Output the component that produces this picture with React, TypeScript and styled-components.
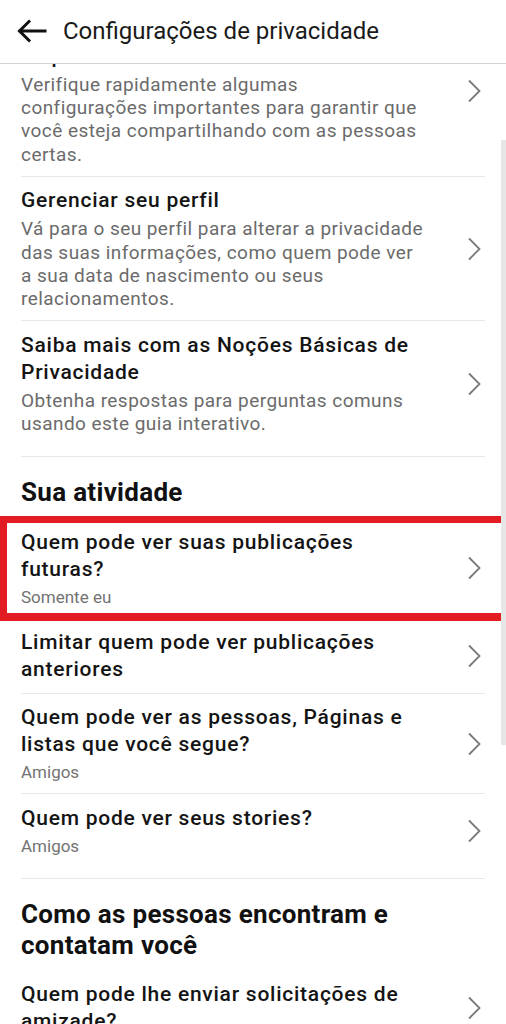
import React from "react";
import styled, { createGlobalStyle } from "styled-components";

const GlobalStyle = createGlobalStyle`
  html, body {
    margin: 0;
    padding: 0;
    background: #ffffff;
  }
  body {
    font-family: Roboto, "Noto Sans", "Liberation Sans", sans-serif;
    -webkit-font-smoothing: antialiased;
  }
`;

interface Setting {
  title: React.ReactNode;
  description?: string;
  value?: string;
  highlighted?: boolean;
}

interface SectionData {
  heading?: string;
  items: Setting[];
}

const sections: SectionData[] = [
  {
    items: [
      {
        title: (
          <>
            Verificação das configurações
            <br />
            de privacidade
          </>
        ),
        description:
          "Verifique rapidamente algumas configurações importantes para garantir que você esteja compartilhando com as pessoas certas.",
      },
      {
        title: "Gerenciar seu perfil",
        description:
          "Vá para o seu perfil para alterar a privacidade das suas informações, como quem pode ver a sua data de nascimento ou seus relacionamentos.",
      },
      {
        title: "Saiba mais com as Noções Básicas de Privacidade",
        description:
          "Obtenha respostas para perguntas comuns usando este guia interativo.",
      },
    ],
  },
  {
    heading: "Sua atividade",
    items: [
      {
        title: "Quem pode ver suas publicações futuras?",
        value: "Somente eu",
        highlighted: true,
      },
      { title: "Limitar quem pode ver publicações anteriores" },
      {
        title: "Quem pode ver as pessoas, Páginas e listas que você segue?",
        value: "Amigos",
      },
      { title: "Quem pode ver seus stories?", value: "Amigos" },
    ],
  },
  {
    heading: "Como as pessoas encontram e contatam você",
    items: [{ title: "Quem pode lhe enviar solicitações de amizade?" }],
  },
];

const BackArrow = () => (
  <svg width="30" height="24" viewBox="0 0 30 24" fill="none">
    <path
      d="M28 12H3M12 2.5L2.5 12l9.5 9.5"
      stroke="#111"
      strokeWidth="3"
      strokeLinecap="square"
    />
  </svg>
);

const Chevron = () => (
  <svg width="14" height="24" viewBox="0 0 14 24" fill="none">
    <path d="M2 1.5L12.5 12 2 22.5" stroke="#7a7a7a" strokeWidth="1.8" />
  </svg>
);

export default function App() {
  return (
    <>
      <GlobalStyle />
      <Screen>
        <Header>
          <BackButton>
            <BackArrow />
          </BackButton>
          <HeaderTitle>Configurações de privacidade</HeaderTitle>
        </Header>
        <Viewport>
          <List>
            {sections.map((section, si) => (
              <Section key={si} $last={si === sections.length - 1}>
                {section.heading && <SectionHeading>{section.heading}</SectionHeading>}
                {section.items.map((item, ii) => (
                  <Item key={ii} $highlighted={item.highlighted}>
                    <ItemBody $divider={ii < section.items.length - 1}>
                      <TextColumn>
                        <ItemTitle>{item.title}</ItemTitle>
                        {item.description && <Description>{item.description}</Description>}
                        {item.value && <Value>{item.value}</Value>}
                      </TextColumn>
                      <ChevronBox>
                        <Chevron />
                      </ChevronBox>
                    </ItemBody>
                  </Item>
                ))}
              </Section>
            ))}
          </List>
          <ScrollThumb />
        </Viewport>
      </Screen>
    </>
  );
}

const Screen = styled.div`
  width: 506px;
  height: 1024px;
  display: flex;
  flex-direction: column;
  overflow: hidden;
  background: #fff;
`;

const Header = styled.header`
  height: 63px;
  flex: none;
  display: flex;
  align-items: center;
  gap: 16px;
  padding: 0 0 0 17px;
  border-bottom: 1px solid #d4d4d4;
  background: #fff;
  position: relative;
  z-index: 1;
`;

const BackButton = styled.div`
  width: 30px;
  height: 24px;
  display: flex;
  align-items: center;
  margin-top: -2px;
`;

const HeaderTitle = styled.h1`
  margin: 0;
  font-size: 24px;
  font-weight: 400;
  color: #1a1a1a;
  margin-top: -1px;
`;

const Viewport = styled.main`
  flex: 1;
  position: relative;
  overflow: hidden;
`;

const List = styled.div`
  margin-top: -59px;
  display: flex;
  flex-direction: column;
`;

const Section = styled.section<{ $last?: boolean }>`
  display: flex;
  flex-direction: column;
  position: relative;

  &::after {
    content: "";
    display: ${(p) => (p.$last ? "none" : "block")};
    height: 1px;
    margin: 10px 21px 0;
    background: #e8e8e8;
  }
`;

const SectionHeading = styled.h2`
  margin: 0;
  padding: 20px 60px 10px 21px;
  font-size: 26px;
  line-height: 31px;
  font-weight: 700;
  letter-spacing: 0.3px;
  color: #111;
`;

const Item = styled.div<{ $highlighted?: boolean }>`
  position: relative;
  padding: 0 21px;

  &::after {
    content: "";
    display: ${(p) => (p.$highlighted ? "block" : "none")};
    position: absolute;
    left: 0;
    right: 0;
    top: -2px;
    bottom: -2px;
    border: 7px solid #e31b23;
    border-right-width: 5px;
    border-bottom-width: 8px;
    pointer-events: none;
  }
`;

const ItemBody = styled.div<{ $divider?: boolean }>`
  display: flex;
  align-items: center;
  padding: 10.5px 0 9.5px;
  border-bottom: 1px solid ${(p) => (p.$divider ? "#e8e8e8" : "transparent")};
`;

const TextColumn = styled.div`
  width: 406px;
  flex: none;
  display: flex;
  flex-direction: column;
`;

const ItemTitle = styled.div`
  font-size: 21px;
  line-height: 27px;
  font-weight: 500;
  letter-spacing: 0.75px;
  color: #141414;
`;

const Description = styled.div`
  margin-top: 3px;
  font-size: 19px;
  line-height: 23.4px;
  letter-spacing: 0.45px;
  color: #6b6b6b;
`;

const Value = styled.div`
  margin: 4px 0 1.5px;
  font-size: 17px;
  line-height: 20px;
  color: #737373;
`;

const ChevronBox = styled.div`
  flex: 1;
  display: flex;
  justify-content: flex-end;
  padding-right: 4px;
`;

const ScrollThumb = styled.div`
  position: absolute;
  right: 0;
  top: 76px;
  width: 5px;
  height: 605px;
  background: #e6e6e6;
`;
